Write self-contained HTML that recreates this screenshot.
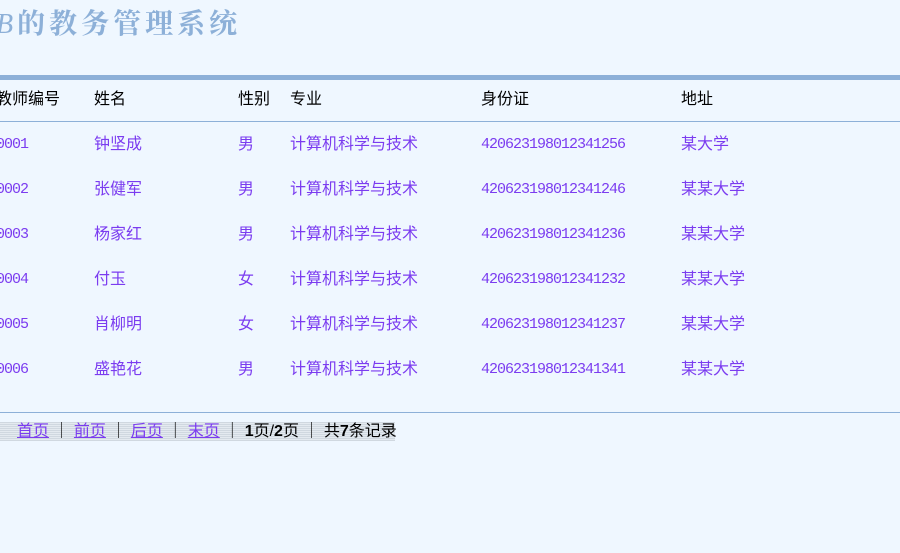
<!DOCTYPE html>
<html><head><meta charset="utf-8"><style>
body{margin:0;width:900px;height:553px;background:#eff7ff;font-family:"Liberation Sans","Noto Sans CJK SC",sans-serif;font-size:16px;position:relative;overflow:hidden}
.t{position:absolute;white-space:nowrap;line-height:16px}
.h{color:#000}
.p{color:#7b3cf0}
.n{font-family:"Liberation Mono",monospace;font-size:15px;letter-spacing:-1px}
#title{position:absolute;left:-4px;top:6px;font-size:28px;font-weight:bold;color:#8db0d8;font-family:"Noto Serif CJK SC",serif;letter-spacing:4px;line-height:32px}
.pg{position:absolute;left:0;top:422px;width:395px;height:19px;background:repeating-linear-gradient(0deg,#d0d8e0 0 1px,transparent 1px 2px),#e4eaf0}
a{color:#7b3cf0;text-decoration:underline}
</style></head><body>
<div id="title"><i style="font-family:'Liberation Serif';font-weight:normal">B</i>的教务管理系统</div>
<div style="position:absolute;left:0;top:75px;width:900px;height:5px;background:#8db0d8"></div>
<div style="position:absolute;left:0;top:121px;width:900px;height:1px;background:#8db0d8"></div>
<div style="position:absolute;left:0;top:412px;width:900px;height:1px;background:#8db0d8"></div>
<div class="t h" style="left:-4px;top:92px">教师编号</div>
<div class="t h" style="left:94px;top:92px">姓名</div>
<div class="t h" style="left:238px;top:92px">性别</div>
<div class="t h" style="left:290px;top:92px">专业</div>
<div class="t h" style="left:481px;top:92px">身份证</div>
<div class="t h" style="left:681px;top:92px">地址</div>

<div class="t p n" style="left:-4px;top:137px">0001</div><div class="t p" style="left:94px;top:137px">钟坚成</div><div class="t p" style="left:238px;top:137px">男</div><div class="t p" style="left:290px;top:137px">计算机科学与技术</div><div class="t p n" style="left:481px;top:137px">420623198012341256</div><div class="t p" style="left:681px;top:137px">某大学</div>
<div class="t p n" style="left:-4px;top:182px">0002</div><div class="t p" style="left:94px;top:182px">张健军</div><div class="t p" style="left:238px;top:182px">男</div><div class="t p" style="left:290px;top:182px">计算机科学与技术</div><div class="t p n" style="left:481px;top:182px">420623198012341246</div><div class="t p" style="left:681px;top:182px">某某大学</div>
<div class="t p n" style="left:-4px;top:227px">0003</div><div class="t p" style="left:94px;top:227px">杨家红</div><div class="t p" style="left:238px;top:227px">男</div><div class="t p" style="left:290px;top:227px">计算机科学与技术</div><div class="t p n" style="left:481px;top:227px">420623198012341236</div><div class="t p" style="left:681px;top:227px">某某大学</div>
<div class="t p n" style="left:-4px;top:272px">0004</div><div class="t p" style="left:94px;top:272px">付玉</div><div class="t p" style="left:238px;top:272px">女</div><div class="t p" style="left:290px;top:272px">计算机科学与技术</div><div class="t p n" style="left:481px;top:272px">420623198012341232</div><div class="t p" style="left:681px;top:272px">某某大学</div>
<div class="t p n" style="left:-4px;top:317px">0005</div><div class="t p" style="left:94px;top:317px">肖柳明</div><div class="t p" style="left:238px;top:317px">女</div><div class="t p" style="left:290px;top:317px">计算机科学与技术</div><div class="t p n" style="left:481px;top:317px">420623198012341237</div><div class="t p" style="left:681px;top:317px">某某大学</div>
<div class="t p n" style="left:-4px;top:362px">0006</div><div class="t p" style="left:94px;top:362px">盛艳花</div><div class="t p" style="left:238px;top:362px">男</div><div class="t p" style="left:290px;top:362px">计算机科学与技术</div><div class="t p n" style="left:481px;top:362px">420623198012341341</div><div class="t p" style="left:681px;top:362px">某某大学</div>

<div class="pg"></div>
<div class="t" style="left:17px;top:424px;font-size:16px"><a>首页</a> ｜ <a>前页</a> ｜ <a>后页</a> ｜ <a>末页</a> ｜ <b>1</b>页/<b>2</b>页 ｜ 共<b>7</b>条记录</div>
</body></html>
